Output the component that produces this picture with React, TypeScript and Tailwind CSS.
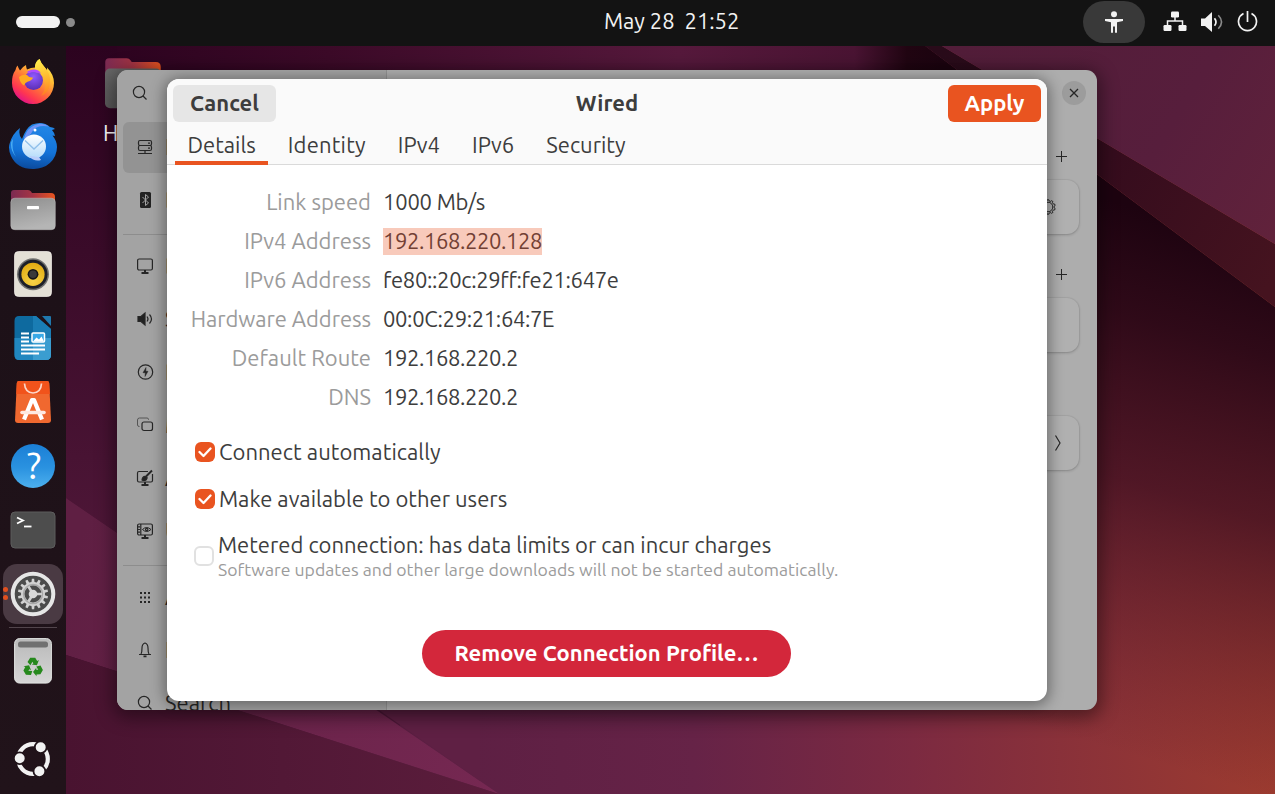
import type { ReactNode } from "react";

function gearPath(cx: number, cy: number, teeth: number, outer: number, inner: number) {
  const pts: string[] = [];
  const step = (Math.PI * 2) / teeth;
  for (let i = 0; i < teeth; i++) {
    const a = i * step - Math.PI / 2;
    const at = (r: number, o: number) =>
      `${(cx + r * Math.cos(a + o * step)).toFixed(2)} ${(cy + r * Math.sin(a + o * step)).toFixed(2)}`;
    pts.push(at(inner, -0.28), at(outer, -0.17), at(outer, 0.17), at(inner, 0.28));
  }
  return `M${pts.join("L")}Z`;
}

function Wallpaper() {
  return (
    <svg className="absolute inset-0" width="1275" height="794" viewBox="0 0 1275 794">
      <defs>
        <linearGradient id="wBase" gradientUnits="userSpaceOnUse" x1="66" y1="0" x2="1275" y2="0">
          <stop offset="0" stopColor="#3a0b29" />
          <stop offset="0.3" stopColor="#5c1f43" />
          <stop offset="0.52" stopColor="#662347" />
          <stop offset="0.7" stopColor="#7c2a41" />
          <stop offset="1" stopColor="#9c3b2f" />
        </linearGradient>
        <linearGradient id="wLeft" gradientUnits="userSpaceOnUse" x1="0" y1="46" x2="0" y2="560">
          <stop offset="0" stopColor="#2c031f" />
          <stop offset="1" stopColor="#4f1738" />
        </linearGradient>
        <linearGradient id="wTop" gradientUnits="userSpaceOnUse" x1="66" y1="0" x2="942" y2="0">
          <stop offset="0" stopColor="#2a021e" />
          <stop offset="0.3" stopColor="#3c0a28" />
          <stop offset="0.7" stopColor="#56193c" />
          <stop offset="0.9" stopColor="#4a1433" />
          <stop offset="0.96" stopColor="#210512" />
          <stop offset="1" stopColor="#1c0410" />
        </linearGradient>
        <linearGradient id="wBand" gradientUnits="userSpaceOnUse" x1="66" y1="560" x2="499" y2="794">
          <stop offset="0" stopColor="#5f1f43" />
          <stop offset="1" stopColor="#762852" />
        </linearGradient>
        <linearGradient id="wLow" gradientUnits="userSpaceOnUse" x1="66" y1="0" x2="499" y2="0">
          <stop offset="0" stopColor="#491330" />
          <stop offset="1" stopColor="#5b1d3c" />
        </linearGradient>
        <linearGradient id="wShade" gradientUnits="userSpaceOnUse" x1="1160" y1="215" x2="1010" y2="720">
          <stop offset="0" stopColor="#1d0310" />
          <stop offset="0.2" stopColor="#2b0817" stopOpacity="0.96" />
          <stop offset="0.5" stopColor="#3b0d20" stopOpacity="0.75" />
          <stop offset="1" stopColor="#55182c" stopOpacity="0" />
        </linearGradient>
        <linearGradient id="wStripe" gradientUnits="userSpaceOnUse" x1="942" y1="46" x2="1275" y2="275">
          <stop offset="0" stopColor="#290b1a" />
          <stop offset="0.5" stopColor="#350c1d" />
          <stop offset="1" stopColor="#45131f" />
        </linearGradient>
        <linearGradient id="wRight" gradientUnits="userSpaceOnUse" x1="960" y1="46" x2="1275" y2="240">
          <stop offset="0" stopColor="#521d39" />
          <stop offset="0.6" stopColor="#571e3c" />
          <stop offset="1" stopColor="#61223b" />
        </linearGradient>
      </defs>
      <rect width="1275" height="794" fill="url(#wBase)" />
      <path d="M925 46L1275 307V794H700V46Z" fill="url(#wShade)" />
      <path d="M0 46H400V726L66 498H0Z" fill="url(#wLeft)" />
      <path d="M117 46H925L970 80H117Z" fill="url(#wTop)" />
      <path d="M0 453L66 498L499 794L66 655L0 634Z" fill="url(#wBand)" />
      <path d="M0 634L66 655L499 794H0Z" fill="url(#wLow)" />
      <path d="M379 710H480V781Z" fill="#5f2044" />
      <path d="M925 46H942L1275 244V307Z" fill="url(#wStripe)" />
      <path d="M942 46H1275V244Z" fill="url(#wRight)" />
    </svg>
  );
}

function TopBar() {
  return (
    <header className="relative grid h-[46px] shrink-0 grid-cols-3 items-center bg-[#131313] text-[#f2f2f2]">
      <div className="flex items-center gap-[6px] pb-[2px] pl-4">
        <span className="h-3 w-11 rounded-full bg-[#f2f2f2]" />
        <span className="size-[9px] rounded-full bg-[#8a8a8a]" />
      </div>
      <div className="whitespace-pre pb-[5px] pl-[179px] text-[22px] leading-6 tracking-[-0.05px]">May 28  21:52</div>
      <div className="flex items-center justify-end pb-[3px] pr-[17px]">
        <span className="mr-[18px] flex h-[42px] w-[62px] items-center justify-center rounded-full bg-[#393939]">
          <svg width="18" height="22" viewBox="0 0 18 22" fill="#f2f2f2">
            <circle cx="9" cy="3.2" r="3" />
            <path d="M0 8h18v2l-6 1.200v10.500h-2V15.500H8v6.200H6V11.200L0 10Z" />
          </svg>
        </span>
        <svg className="mr-[14px]" width="24" height="21" viewBox="0 0 24 21">
          <g fill="#f2f2f2">
            <rect x="8" y="0.500" width="8" height="6" rx="1.200" />
            <rect x="0.500" y="14" width="8" height="6" rx="1.200" />
            <rect x="15.500" y="14" width="8" height="6" rx="1.200" />
          </g>
          <path d="M12 6v4M4.500 14.500V10h15v4.500" fill="none" stroke="#f2f2f2" strokeWidth="1.500" />
        </svg>
        <svg className="mr-[14px]" width="22" height="22" viewBox="0 0 22 22" fill="none">
          <path d="M0 7.500h4L11 1v20L4 15H0Z" fill="#f2f2f2" />
          <path d="M13.500 7.200q3 3.800 0 7.600" stroke="#f2f2f2" strokeWidth="1.700" />
          <path d="M17.300 4.300q6.500 6.700 0 13.400" stroke="#8a8a8a" strokeWidth="1.600" />
        </svg>
        <svg width="21" height="21" viewBox="0 0 21 21" fill="none" stroke="#f2f2f2" strokeWidth="1.700">
          <path d="M6.500 2.600A9 9 0 1 0 14.500 2.600M10.500 0v11" />
        </svg>
      </div>
    </header>
  );
}

function FirefoxIcon() {
  return (
    <svg width="46" height="46" viewBox="0 0 46 46">
      <defs>
        <linearGradient id="ff1" x1="0.850" y1="0.050" x2="0.250" y2="0.950">
          <stop offset="0" stopColor="#fff44f" />
          <stop offset="0.300" stopColor="#ffbd34" />
          <stop offset="0.580" stopColor="#ff7139" />
          <stop offset="0.820" stopColor="#ff3750" />
          <stop offset="1" stopColor="#e31587" />
        </linearGradient>
        <linearGradient id="ff3" x1="0.300" y1="0" x2="0.500" y2="1">
          <stop offset="0" stopColor="#fff04d" />
          <stop offset="1" stopColor="#ff8a16" stopOpacity="0.600" />
        </linearGradient>
        <radialGradient id="ff2" cx="0.500" cy="0.300" r="0.700">
          <stop offset="0" stopColor="#9059ff" />
          <stop offset="1" stopColor="#5a2fb5" />
        </radialGradient>
      </defs>
      <path d="M5.500 11q.5-3 2-4.500q1 3 2.500 5q2-3.500 6-5.500q0 2.500 1 4.500q4-2 8-2q0-6 4.500-8.500q1.500 4.500 5 8q1.500 1.500 2.500 3.500q.2-2 0-3q7 7 7 15.500A21 21 0 0 1 2 24q-.2-8 3.500-13Z" fill="url(#ff1)" />
      <path d="M25 10q-.5-7 4.500-10q1.500 4.500 5 8q6 6 5.500 15q0 10-9 14q8-10 2-19q-3-5-8-8Z" fill="url(#ff3)" />
      <circle cx="23.500" cy="21.500" r="9.500" fill="url(#ff2)" />
      <path d="M9 18q4-3 8-2q2 3 6 2.500q-1 3-5 4q-3 1-4 4q-4-2-5-8.500Z" fill="#ffab20" />
      <path d="M17 13q2-2 7-2.500q5 0 7 4q-2-1-4-.5q-4-2-8 .5Z" fill="#b04cff" />
    </svg>
  );
}

function ThunderbirdIcon() {
  return (
    <svg width="50" height="48" viewBox="0 0 50 48">
      <defs>
        <linearGradient id="tb1" x1="0.500" y1="0" x2="0.400" y2="1">
          <stop offset="0" stopColor="#2387e6" />
          <stop offset="0.600" stopColor="#1373d9" />
          <stop offset="1" stopColor="#0b4a9c" />
        </linearGradient>
        <linearGradient id="tb2" x1="0" y1="0" x2="0" y2="1">
          <stop offset="0" stopColor="#ffffff" />
          <stop offset="1" stopColor="#b4dcfa" />
        </linearGradient>
      </defs>
      <path d="M1.500 22Q4 12 12 6q-2 7 2 11q4-11 10-14.500Q35-1.500 42 5q4 .5 5 2l-3 1q2 2 3 6l-2.500-.5Q49 19 49 25A23 22 0 0 1 25 47Q9 47 3 34Q0 27 1.500 22Z" fill="url(#tb1)" />
      <path d="M16 16Q19 6 27 3q8-3 14 1.500q-12-2-16 4q-2 4-5 6q-2 2-3 4Z" fill="#8f9bff" opacity=".7" />
      <path d="M5 17q-2 10 3 18q-5-6-5-12q0-4 2-6Z" fill="#63c7ff" opacity=".7" />
      <circle cx="26" cy="24.500" r="12" fill="url(#tb2)" />
      <path d="M17 18.500L26 27l9-8.500" fill="none" stroke="#8fbfea" strokeWidth="1.300" />
      <path d="M21 34q5 6 12 4l-2-3Z" fill="#b9cdfa" />
      <circle cx="27" cy="8" r="1.500" fill="#fff" />
    </svg>
  );
}

function FolderIcon({ id, dim }: { id: string; dim?: boolean }) {
  return (
    <svg width="46" height="42" viewBox="0 0 46 42">
      <defs>
        <linearGradient id={id} x1="0" y1="0" x2="1" y2="0">
          <stop offset="0" stopColor="#7b2a52" />
          <stop offset="0.500" stopColor="#a53444" />
          <stop offset="1" stopColor="#e9541f" />
        </linearGradient>
        <linearGradient id={id + "f"} x1="0" y1="0" x2="0.300" y2="1">
          <stop offset="0" stopColor={dim ? "#686868" : "#8e8e8e"} />
          <stop offset="1" stopColor={dim ? "#585858" : "#b5b5b5"} />
        </linearGradient>
      </defs>
      <path d="M4 1H18q2 0 3 1.500L22 4H41q4 0 4 4V24H1V4Q1 1 4 1Z" fill={`url(#${id})`} />
      <rect x="0.800" y="9.200" width="44.500" height="31.500" rx="4" fill={`url(#${id}f)`} stroke="#c4c4c4" strokeOpacity={dim ? 0 : 0.6} strokeWidth="0.800" />
      {!dim && <rect x="17" y="17" width="12" height="3.200" rx="0.800" fill="#fff" />}
    </svg>
  );
}

function SpeakerIcon() {
  return (
    <svg width="38" height="46" viewBox="0 0 38 46">
      <defs>
        <radialGradient id="sp1" cx="0.500" cy="0.800" r="0.900">
          <stop offset="0" stopColor="#f6d348" />
          <stop offset="1" stopColor="#dfa60a" />
        </radialGradient>
      </defs>
      <rect x="0.500" y="0.500" width="37" height="45" rx="4" fill="#e4e0d6" stroke="#f5f2ec" strokeWidth="0.700" />
      <circle cx="19" cy="23.300" r="16" fill="#71716f" />
      <circle cx="19" cy="23.300" r="14.500" fill="#1c1f28" />
      <circle cx="19" cy="23.300" r="11.600" fill="url(#sp1)" />
      <circle cx="19" cy="23.300" r="5.400" fill="#161616" />
      <circle cx="19" cy="23.300" r="3.800" fill="#3a3a3a" />
    </svg>
  );
}

function WriterIcon() {
  return (
    <svg width="38" height="46" viewBox="0 0 38 46">
      <path d="M5 1H22L37 14V40q0 5-5 5H5q-4.500 0-4.500-5V6Q.5 1 5 1Z" fill="#0e6a9f" />
      <path d="M19 1h3L37 14V23H19Z" fill="#1a7db4" />
      <path d="M.5 23H37V40q0 5-5 5H5q-4.500 0-4.500-5Z" fill="#2187bf" />
      <path d="M19 23H37V40q0 5-5 5H19Z" fill="#3a9dd0" />
      <path d="M28 1h8q1 0 1 1v9Z" fill="#1f78ad" />
      <path d="M7 18.500h8M7 22.500h8M7 26.500h8M7 30.500h24M7 34.500h24M7 38.500h18" stroke="#fff" strokeWidth="2" />
      <rect x="18" y="18" width="12.500" height="9" rx="1" fill="#39a9e6" stroke="#fff" strokeWidth="1.500" />
      <path d="M19 26.500l3.500-4 2.500 2 2.500-3 2.500 5Z" fill="#fff" />
    </svg>
  );
}

function AppCenterIcon() {
  return (
    <svg width="38" height="44" viewBox="0 0 38 44">
      <path d="M5 1H33q2 0 2.200 2L37 40q0 3-3 3H4q-3 0-3-3L2.800 3Q3 1 5 1Z" fill="#f0682f" />
      <path d="M5 1H33q2 0 2.200 2L35.900 14H2.200L2.800 3Q3 1 5 1Z" fill="#f1531b" />
      <path d="M10.500 3.500q.5 9 8.500 9.500q8-.5 8.500-9.500" fill="none" stroke="#fbd6c8" strokeWidth="1.700" />
      <path d="M10 39.500L18 20h2l8 19.500" fill="none" stroke="#fff" strokeWidth="4.200" strokeLinejoin="round" />
      <path d="M8 32.500H30" stroke="#ffe9e0" strokeWidth="3.600" strokeLinecap="round" />
    </svg>
  );
}

function HelpIcon() {
  return (
    <span className="flex size-11 items-center justify-center rounded-full bg-linear-to-b from-[#1b7fd6] from-0% via-[#2a92e0] via-54% to-[#4cb0ee] to-100% pb-px pl-[2px] text-[37px] leading-none text-white">
      ?
    </span>
  );
}

function TerminalIcon() {
  return (
    <svg width="46" height="38" viewBox="0 0 46 38">
      <rect x="1" y="1" width="44" height="36" rx="4" fill="#4d4d4d" stroke="#5d5d5d" strokeWidth="1" />
      <path d="M7 6.500l6 3-6 3" fill="none" stroke="#fff" strokeWidth="1.800" />
      <path d="M14 15.500h7.500" stroke="#fff" strokeWidth="1.800" />
    </svg>
  );
}

function SettingsIcon() {
  return (
    <svg width="46" height="46" viewBox="0 0 46 46">
      <circle cx="23" cy="23" r="20.300" fill="#4b4b4b" stroke="#e6e6e6" strokeWidth="4" />
      <path d={gearPath(23, 23, 14, 15.200, 12)} fill="#d2d2d2" />
      <circle cx="23" cy="23" r="9.500" fill="none" stroke="#a9a9a9" strokeWidth="1.500" />
      <circle cx="23" cy="23" r="8.500" fill="#4b4b4b" />
      <path d="M23 23L18.500 15.500M23 23h9M23 23l-4.500 7.500" stroke="#cfcfcf" strokeWidth="2.600" />
      <circle cx="23" cy="23" r="4.300" fill="#d8d8d8" />
    </svg>
  );
}

function TrashIcon() {
  return (
    <svg width="38" height="46" viewBox="0 0 38 46">
      <defs>
        <linearGradient id="tr" x1="0" y1="0" x2="0" y2="1">
          <stop offset="0" stopColor="#b9b9b9" />
          <stop offset="1" stopColor="#d6d6d6" />
        </linearGradient>
      </defs>
      <rect x="0.600" y="0.600" width="36.800" height="44.500" rx="5" fill="url(#tr)" stroke="#e3e6e4" strokeWidth="1" />
      <rect x="4" y="3.500" width="30" height="6" rx="2.500" fill="#707070" />
      <g fill="#26891c">
        {[0, 120, 240].map((r) => (
          <path key={r} transform={`rotate(${r} 19 29.500)`} d="M13.500 24l2.700-4.300h5l2 3.300 1.700-1-2 5.200-5.200-.7 1.700-1-1-1.700-2 3.400Z" />
        ))}
      </g>
    </svg>
  );
}

function UbuntuIcon() {
  return (
    <svg width="38" height="38" viewBox="0 0 38 38">
      <circle cx="19" cy="19" r="14.800" fill="none" stroke="#f2f2f2" strokeWidth="4.200" />
      {[[5.700, 18.300], [26.700, 7.200], [25.400, 31.300]].map(([x, y]) => (
        <circle key={x} cx={x} cy={y} r="5.900" fill="#f2f2f2" stroke="#201319" strokeWidth="1.800" />
      ))}
    </svg>
  );
}

function Dock() {
  const apps: ReactNode[] = [
    <FirefoxIcon />,
    <ThunderbirdIcon />,
    <FolderIcon id="dockFolder" />,
    <SpeakerIcon />,
    <WriterIcon />,
    <AppCenterIcon />,
    <HelpIcon />,
    <TerminalIcon />,
  ];
  return (
    <nav className="relative flex w-[66px] shrink-0 flex-col bg-linear-to-b from-[#1b1017] to-[#21131a] pt-1">
      {apps.map((icon, i) => (
        <div key={i} className="flex h-16 items-center justify-center">
          {icon}
        </div>
      ))}
      <div className="flex h-16 items-center px-[3px]">
        <div className="relative flex size-[60px] items-center justify-center rounded-[14px] bg-[#4a3a43]">
          <SettingsIcon />
          <span className="absolute left-0 top-[23px] flex flex-col gap-[3px]">
            <i className="size-[5px] rounded-full bg-[#e2501f]" />
            <i className="size-[5px] rounded-full bg-[#e2501f]" />
          </span>
        </div>
      </div>
      <div className="mx-[9px] mt-px h-px bg-[#52454c]" />
      <div className="mt-px flex h-16 items-center justify-center">
        <TrashIcon />
      </div>
      <div className="mt-auto flex justify-center pb-4">
        <UbuntuIcon />
      </div>
    </nav>
  );
}

function Line({ children }: { children: ReactNode }) {
  return (
    <svg width="18" height="18" viewBox="0 0 18 18" fill="none" stroke="#262626" strokeWidth="1.200">
      {children}
    </svg>
  );
}

const searchGlyph = (
  <Line>
    <circle cx="8" cy="8" r="5.600" />
    <path d="M12 12l3.500 3.500" />
  </Line>
);

const groups: { label: string; icon: ReactNode; active?: boolean }[][] = [
  [
    {
      label: "Network",
      active: true,
      icon: (
        <Line>
          <rect x="2.500" y="2.500" width="13" height="5" rx="1.500" />
          <rect x="2.500" y="7.500" width="13" height="5" rx="1.500" />
          <path d="M12 5.200h2M12 10.200h2M9 12.500v2.500M2 15.500h14" />
        </Line>
      ),
    },
    {
      label: "Bluetooth",
      icon: (
        <Line>
          <rect x="4" y="1" width="11" height="16" rx="1.500" fill="#222" stroke="none" />
          <path d="M6.500 6l6 6-3 2.500v-11l3 2.500-6 6" stroke="#a2a2a2" strokeWidth="1" />
        </Line>
      ),
    },
  ],
  [
    {
      label: "Displays",
      icon: (
        <Line>
          <rect x="1.600" y="2" width="14.800" height="11" rx="1.500" />
          <path d="M5.500 16h7M9 13v3" strokeWidth="2" />
        </Line>
      ),
    },
    {
      label: "Sound",
      icon: (
        <Line>
          <path d="M2 6.500h3L9 3v12L5 11.500H2Z" fill="#222" />
          <path d="M11 6.500q2 2.500 0 5" />
          <path d="M13.500 4.500q4 4.500 0 9" />
        </Line>
      ),
    },
    {
      label: "Power",
      icon: (
        <Line>
          <circle cx="9.500" cy="9" r="7.200" />
          <path d="M10 4.500L7 9.700h2.300L9 13.500l3-5.200H9.800Z" fill="#222" strokeWidth="0.500" />
        </Line>
      ),
    },
    {
      label: "Multitasking",
      icon: (
        <Line>
          <path d="M12.500 4V3.500q0-1.500-1.500-1.500H3.500Q1.500 2 1.500 4v5q0 1.500 2 1.500" stroke="#555" strokeWidth="1" />
          <rect x="6" y="6" width="10.500" height="8.500" rx="2" />
        </Line>
      ),
    },
    {
      label: "Appearance",
      icon: (
        <Line>
          <path d="M12 2.500H3q-1.500 0-1.500 1.500v7.500q0 1.500 1.500 1.500h12q1.500 0 1.500-1.500V5" />
          <path d="M5.500 16h7M9 13v3" strokeWidth="2" />
          <path d="M16 1.500L10 7.500" strokeWidth="2" />
          <path d="M6 11q.5-4 3.500-3.500T10 11Q8 12 6 11Z" fill="#222" />
        </Line>
      ),
    },
    {
      label: "Ubuntu Desktop",
      icon: (
        <Line>
          <rect x="1.600" y="2" width="14.800" height="11" rx="1.500" />
          <path d="M5.500 16h7M9 13v3" strokeWidth="2" />
          <path d="M4.800 2v11M2 4.800h2M2 7.500h2M2 10.200h2" />
          <path d="M6.500 7.500Q10.500 3.500 15 7.500Q10.500 11.500 6.500 7.500Z" strokeWidth="1" />
          <circle cx="10.700" cy="7.500" r="1.200" />
        </Line>
      ),
    },
  ],
  [
    {
      label: "Apps",
      icon: (
        <Line>
          <path d="M4 5h2m2 0h2m2 0h2M4 9.500h2m2 0h2m2 0h2M4 14h2m2 0h2m2 0h2" strokeWidth="2" />
        </Line>
      ),
    },
    {
      label: "Notifications",
      icon: (
        <Line>
          <path d="M3 13.500h12M5 13Q6 11.500 6 7q0-4 3-5q3 1 3 5q0 4.500 1 6" />
          <path d="M7.500 15.300h3" strokeWidth="1.800" />
        </Line>
      ),
    },
    { label: "Search", icon: searchGlyph },
  ],
];

function PlusRow() {
  return (
    <div className="flex h-6 justify-end pr-[12px]">
      <svg width="11" height="24" viewBox="0 0 11 24" stroke="#262626" strokeWidth="1">
        <path d="M0 12.500h11M5.500 7v11" />
      </svg>
    </div>
  );
}

function Card({ children }: { children?: ReactNode }) {
  return (
    <div className="flex h-[54px] items-center justify-end rounded-[12px] bg-[#b0b0b0] pr-[17px] shadow-[0_1px_3px_rgba(0,0,0,0.2),0_0_0_1px_rgba(0,0,0,0.04)]">
      {children}
    </div>
  );
}

function SettingsWindow() {
  return (
    <section className="absolute left-[51px] top-6 flex h-[640px] w-[980px] overflow-hidden rounded-[11px] bg-[#adadad] shadow-[0_4px_18px_4px_rgba(0,0,0,0.42)]">
      <aside className="w-[270px] shrink-0 border-r border-[#929292] bg-[#a3a3a3]">
        <div className="flex h-[46px] items-center pl-[14px]">{searchGlyph}</div>
        <div className="flex flex-col px-1.5 pt-[6px]">
          {groups.map((group, g) => (
            <div key={g} className={g ? "mt-2 flex flex-col gap-[2px] border-t border-[#8d8d8d] pt-1.5" : "flex flex-col gap-[2px]"}>
              {group.map((item) => (
                <div
                  key={item.label}
                  className={`flex h-[51px] shrink-0 items-center gap-[11px] whitespace-nowrap rounded-md pb-[2px] pl-[13px] text-[22px] text-[#262626] ${item.active ? "bg-[#939393]" : ""}`}
                >
                  {item.icon}
                  <span>{item.label}</span>
                </div>
              ))}
            </div>
          ))}
        </div>
      </aside>
      <div className="flex flex-1 flex-col px-[18px]">
        <div className="mr-[-7px] flex h-[74px] justify-end pt-[11px]">
          <span className="flex size-6 items-center justify-center rounded-full bg-[#9c9c9c]">
            <svg width="10" height="10" viewBox="0 0 10 10" stroke="#262626" strokeWidth="1.300">
              <path d="M1 1l8 8M9 1L1 9" />
            </svg>
          </span>
        </div>
        <PlusRow />
        <div className="mt-3">
          <Card>
            <span className="mr-[6px]">
              <svg width="16" height="18" viewBox="0 0 16 18" fill="none" stroke="#262626" strokeWidth="1">
                <path d={gearPath(8, 9, 10, 7.300, 6.200)} />
                <circle cx="8" cy="9" r="4.800" />
              </svg>
            </span>
          </Card>
        </div>
        <div className="mt-7">
          <PlusRow />
        </div>
        <div className="mt-3">
          <Card />
        </div>
        <div className="mt-16">
          <Card>
            <svg width="8" height="16" viewBox="0 0 8 16" fill="none" stroke="#262626" strokeWidth="1.200">
              <path d="M1.500 .5L6 8l-4.500 7.500" />
            </svg>
          </Card>
        </div>
      </div>
    </section>
  );
}

function Check({ on }: { on?: boolean }) {
  return on ? (
    <span className="flex size-5 shrink-0 items-center justify-center rounded-[6px] bg-[#e95420]">
      <svg width="14" height="12" viewBox="0 0 14 12" fill="none" stroke="#fff" strokeWidth="2.300" strokeLinecap="round" strokeLinejoin="round">
        <path d="M1.500 6l4 4 7-7.500" />
      </svg>
    </span>
  ) : (
    <span className="size-5 shrink-0 rounded-[6px] border-2 border-[#e1e1e1] bg-white" />
  );
}

const details: [string, string, string?][] = [
  ["Link speed", "1000 Mb/s", "tracking-[-0.2px]"],
  ["IPv4 Address", "192.168.220.128", "bg-[#f8cabb] text-[#724034] tracking-[-0.4px]"],
  ["IPv6 Address", "fe80::20c:29ff:fe21:647e", "tracking-[-0.34px]"],
  ["Hardware Address", "00:0C:29:21:64:7E", "tracking-[-0.36px]"],
  ["Default Route", "192.168.220.2", "tracking-[-0.4px]"],
  ["DNS", "192.168.220.2", "tracking-[-0.4px]"],
];

function WiredDialog() {
  return (
    <section className="absolute left-[101px] top-[33px] flex h-[622px] w-[880px] flex-col overflow-hidden rounded-[12px] bg-white text-[22px] text-[#3d3d3d] shadow-[0_2px_14px_3px_rgba(0,0,0,0.36)]">
      <header className="h-[86px] shrink-0 border-b border-[#dadada] bg-[#fafafa]">
        <div className="grid grid-cols-3 px-1.5 pt-1.5 font-bold">
          <button className="flex h-[37px] w-[103px] items-center justify-center rounded-md bg-[#e6e6e6] pb-[3px]">Cancel</button>
          <span className="flex items-center justify-center pb-[3px]">Wired</span>
          <button className="flex h-[37px] w-[93px] items-center justify-center justify-self-end rounded-md bg-[#e95420] pb-[3px] text-white">Apply</button>
        </div>
        <div className="flex gap-[7px] pl-2">
          {["Details", "Identity", "IPv4", "IPv6", "Security"].map((t, i) => (
            <span
              key={t}
              className={`flex h-[43px] items-center border-b-4 px-[12.5px] pt-[5px] ${i === 0 ? "border-[#e95420]" : "border-transparent"} ${t === "Identity" ? "tracking-[0.2px]" : ""}`}
            >
              {t}
            </span>
          ))}
        </div>
      </header>
      <dl className="grid grid-cols-[204px_auto] gap-x-[12px] pt-[18px]">
        {details.map(([k, v, cls]) => (
          <div key={k} className="contents">
            <dt className={`flex h-[39px] items-center justify-end pb-[2px] text-[#9b9b9b] ${k === "Hardware Address" ? "tracking-[-0.06px]" : ""}`}>{k}</dt>
            <dd className="flex h-[39px] items-center">
              <span className={`h-[27px] leading-[25px] ${cls ?? ""}`}>{v}</span>
            </dd>
          </div>
        ))}
      </dl>
      <div className="mt-[11px] flex h-[47px] items-center gap-1 pl-7">
        <Check on />
        <span className="tracking-[0.04px]">Connect automatically</span>
      </div>
      <div className="flex h-[47px] items-center gap-1 pl-7">
        <Check on />
        <span>Make available to other users</span>
      </div>
      <div className="flex h-[68px] items-center gap-1 pl-[27px]">
        <Check />
        <div className="flex flex-col pt-[2px]">
          <span className="leading-[26px]">Metered connection: has data limits or can incur charges</span>
          <span className="text-[17.6px] leading-6 tracking-[0.035px] text-[#9b9b9b]">Software updates and other large downloads will not be started automatically.</span>
        </div>
      </div>
      <button className="ml-[255px] mt-[40px] flex h-[47px] w-[369px] items-center justify-center rounded-full bg-[#d3273b] pb-[2px] font-bold text-white">
        Remove Connection Profile…
      </button>
    </section>
  );
}

export default function App() {
  return (
    <div className="relative flex h-[794px] w-[1275px] flex-col overflow-hidden font-['Ubuntu','Noto_Sans',sans-serif]">
      <Wallpaper />
      <TopBar />
      <div className="flex flex-1">
        <Dock />
        <main className="relative flex-1">
          <div className="absolute left-[37px] top-[11px] text-[22px] text-white">
            <div className="ml-px h-[53px] w-14 [&>svg]:h-[53px] [&>svg]:w-[58px]">
              <FolderIcon id="homeFolder" dim />
            </div>
            <div className="mt-[6px]">Home</div>
          </div>
          <SettingsWindow />
          <WiredDialog />
        </main>
      </div>
    </div>
  );
}
